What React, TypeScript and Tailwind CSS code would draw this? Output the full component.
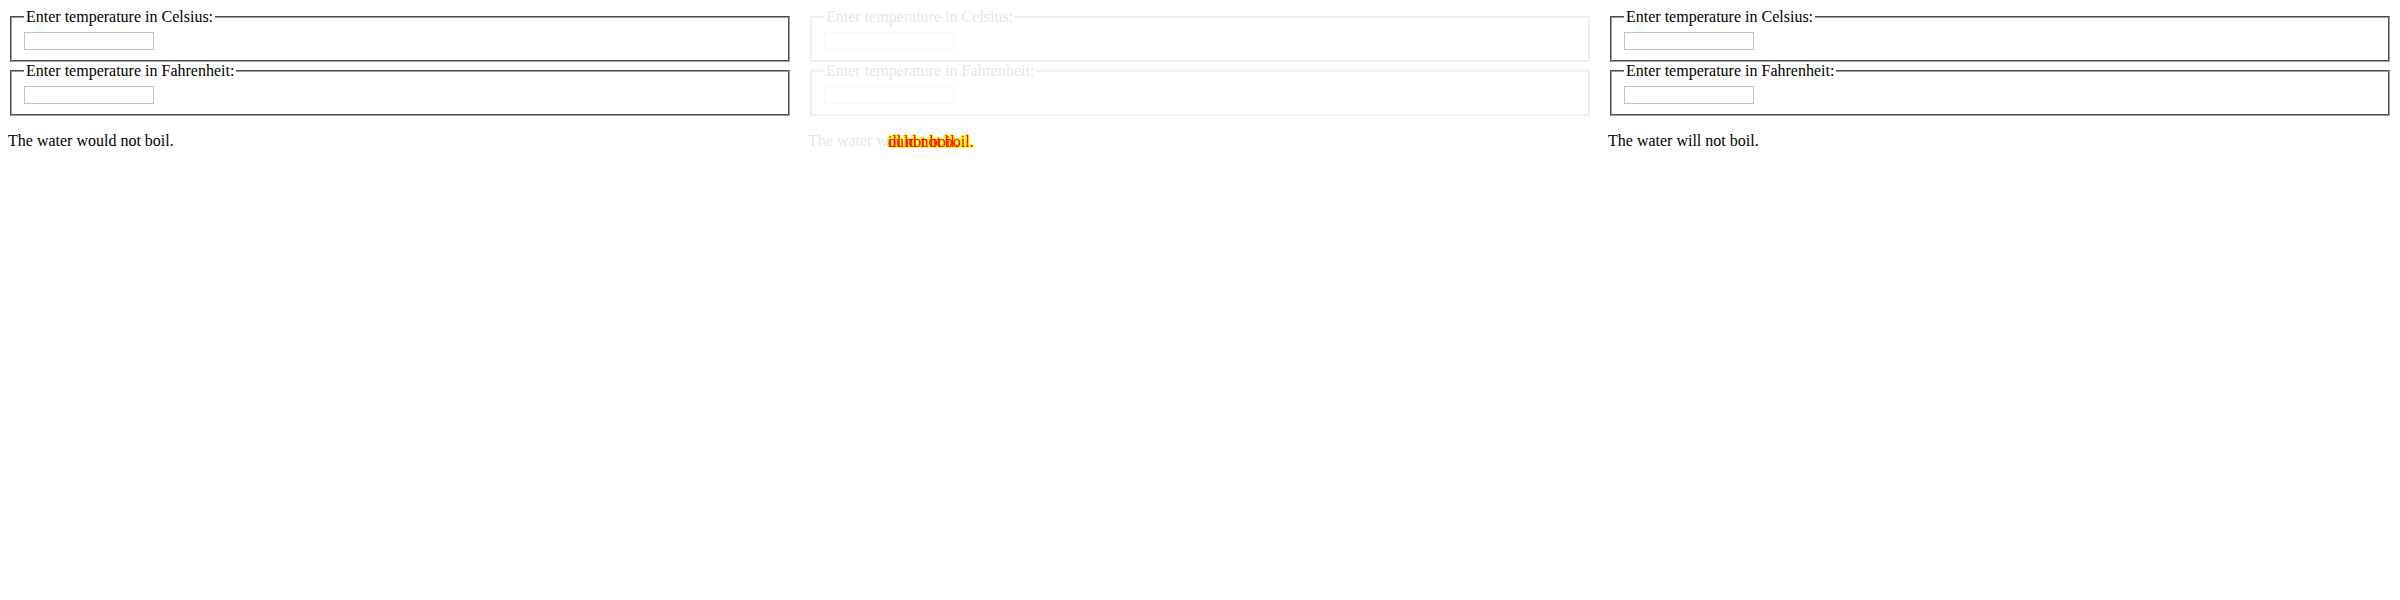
import React from "react";

function TempField({ label }: { label: string }) {
  return (
    <fieldset className="mx-0.5 border-2 border-[#a0a0a0] [border-style:groove] px-3 pt-[5.6px] pb-[10px]">
      <legend className="px-0.5 leading-[normal]">{label}</legend>
      <input
        type="text"
        className="block h-[18.6px] w-[130px] border border-[#c4c4c4] bg-white px-0.5 text-[13px] outline-none"
      />
    </fieldset>
  );
}

function Calculator({ verdict }: { verdict: string }) {
  return (
    <div>
      <TempField label="Enter temperature in Celsius:" />
      <TempField label="Enter temperature in Fahrenheit:" />
      <p className="mt-4 leading-[normal]">{verdict}</p>
    </div>
  );
}

// the changed words, drawn once as a yellow halo and once in red on top
function DiffWords({ halo }: { halo: boolean }) {
  const cls = halo
    ? "text-[#ffff00] [text-shadow:1px_0_0_#ffff00,-1px_0_0_#ffff00,0_1px_0_#ffff00,0_-1px_0_#ffff00,1px_1px_0_#ffff00,-1px_-1px_0_#ffff00]"
    : "text-[#ff0000]";
  return (
    <div className="pointer-events-none absolute left-2 top-[133.2px] leading-[normal]">
      <span className="invisible">The water w</span>
      <span className={`relative ${cls}`}>
        <span>ould not boil.</span>
        <span className="absolute left-0 top-0">ill not boil.</span>
      </span>
    </div>
  );
}

export default function App() {
  return (
    <div className="flex w-[2400px] bg-white font-['Liberation_Serif',serif] text-base text-black">
      {/* expected */}
      <div className="w-[800px] p-2">
        <Calculator verdict="The water would not boil." />
      </div>

      {/* diff */}
      <div className="relative w-[800px] p-2">
        <div className="opacity-10">
          <Calculator verdict="The water would not boil." />
        </div>
        <DiffWords halo />
        <DiffWords halo={false} />
      </div>

      {/* actual */}
      <div className="w-[800px] p-2">
        <Calculator verdict="The water will not boil." />
      </div>
    </div>
  );
}
